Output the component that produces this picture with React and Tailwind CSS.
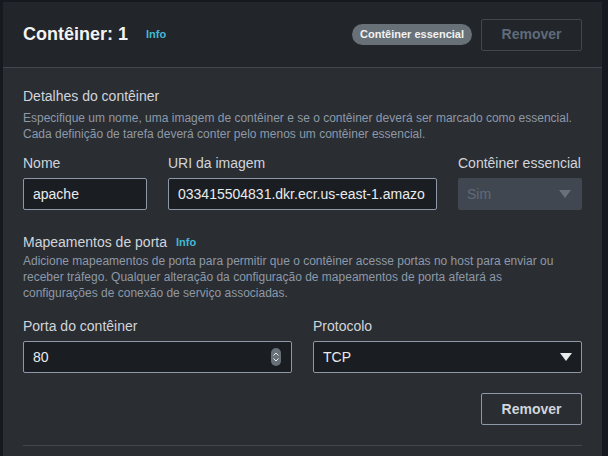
const font = { fontFamily: '"Liberation Sans", Arial, sans-serif' };

function Info() {
  return <span className="text-[11px] font-bold text-[#44b9d6]">Info</span>;
}

function Caret({ color }) {
  return (
    <svg width="12" height="8" viewBox="0 0 12 8" className="shrink-0">
      <path d="M0 0 L12 0 L6 8 Z" fill={color} />
    </svg>
  );
}

function Stepper() {
  return (
    <div className="flex h-[18px] w-[10px] shrink-0 flex-col items-center justify-center gap-[2px] rounded-full bg-[#687078]">
      <svg width="6" height="4" viewBox="0 0 6 4">
        <path d="M0.5 3.5 L3 1 L5.5 3.5" stroke="#e9ebed" strokeWidth="1" fill="none" />
      </svg>
      <svg width="6" height="4" viewBox="0 0 6 4">
        <path d="M0.5 0.5 L3 3 L5.5 0.5" stroke="#e9ebed" strokeWidth="1" fill="none" />
      </svg>
    </div>
  );
}

function Label({ children }) {
  return <div className="mb-1 text-[14px] leading-[22px] text-[#d1d5db]">{children}</div>;
}

const inputCls =
  "flex h-8 items-center rounded-[2px] border border-[#8d99a8] bg-[#1a1d22] px-[9px] text-[14px] text-[#e9ebed] overflow-hidden whitespace-nowrap";

export default function App() {
  return (
    <div style={font} className="h-[456px] w-[608px] overflow-hidden bg-[#16191f] pl-[3px] pr-[6px] pt-[2px]">
      <div className="bg-[#2a2d32]">
        <div className="flex h-[66px] items-center justify-between border-b border-[#414750] bg-[#222529] px-5">
          <div className="flex items-center gap-[18px]">
            <h1 className="text-[18px] font-bold text-[#f2f3f3]">Contêiner: 1</h1>
            <Info />
          </div>
          <div className="flex items-center gap-[9px]">
            <span className="flex h-[21px] items-center rounded-full bg-[#687078] px-2 text-[11px] font-bold text-[#f2f3f3]">
              Contêiner essencial
            </span>
            <button className="h-8 w-[101px] rounded-[2px] border border-[#414750] text-[14px] font-bold text-[#5f6b7a]">
              Remover
            </button>
          </div>
        </div>

        <div className="px-5 pt-[17px]">
          <h2 className="text-[14px] leading-[22px] text-[#d1d5db]">Detalhes do contêiner</h2>
          <p className="mt-[3px] text-[12px] leading-4 text-[#8d99a8]">
            Especifique um nome, uma imagem de contêiner e se o contêiner deverá ser marcado como essencial.
            <br />
            Cada definição de tarefa deverá conter pelo menos um contêiner essencial.
          </p>

          <div className="mt-[10px] grid grid-cols-[124px_1fr_124px] gap-x-[21px]">
            <div>
              <Label>Nome</Label>
              <div className={inputCls}>apache</div>
            </div>
            <div className="min-w-0">
              <Label>URI da imagem</Label>
              <div className={inputCls}>
                <span className="min-w-0 overflow-hidden">033415504831.dkr.ecr.us-east-1.amazo</span>
              </div>
            </div>
            <div>
              <Label>Contêiner essencial</Label>
              <div className="flex h-8 items-center justify-between rounded-[2px] bg-[#414750] pl-[9px] pr-[11px] text-[14px] text-[#5f6b7a]">
                Sim
                <Caret color="#687078" />
              </div>
            </div>
          </div>

          <div className="mt-[21px] flex items-center gap-[9px]">
            <h2 className="text-[14px] leading-[22px] text-[#d1d5db]">Mapeamentos de porta</h2>
            <Info />
          </div>
          <p className="max-w-[545px] text-[12px] leading-4 text-[#8d99a8]">
            Adicione mapeamentos de porta para permitir que o contêiner acesse portas no host para enviar ou
            receber tráfego. Qualquer alteração da configuração de mapeamentos de porta afetará as
            configurações de conexão de serviço associadas.
          </p>

          <div className="mt-[14px] grid grid-cols-2 gap-x-[21px]">
            <div>
              <Label>Porta do contêiner</Label>
              <div className={inputCls + " justify-between pr-[10px]"}>
                80
                <Stepper />
              </div>
            </div>
            <div>
              <Label>Protocolo</Label>
              <div className={inputCls + " justify-between pr-[9px]"}>
                TCP
                <Caret color="#e9ebed" />
              </div>
            </div>
          </div>

          <div className="mt-5 flex justify-end">
            <button className="h-8 w-[101px] rounded-[2px] border border-[#8d99a8] text-[14px] font-bold text-[#d1d5db]">
              Remover
            </button>
          </div>

          <div className="mt-5 h-px bg-[#414750]" />
          <div className="h-10" />
        </div>
      </div>
    </div>
  );
}
